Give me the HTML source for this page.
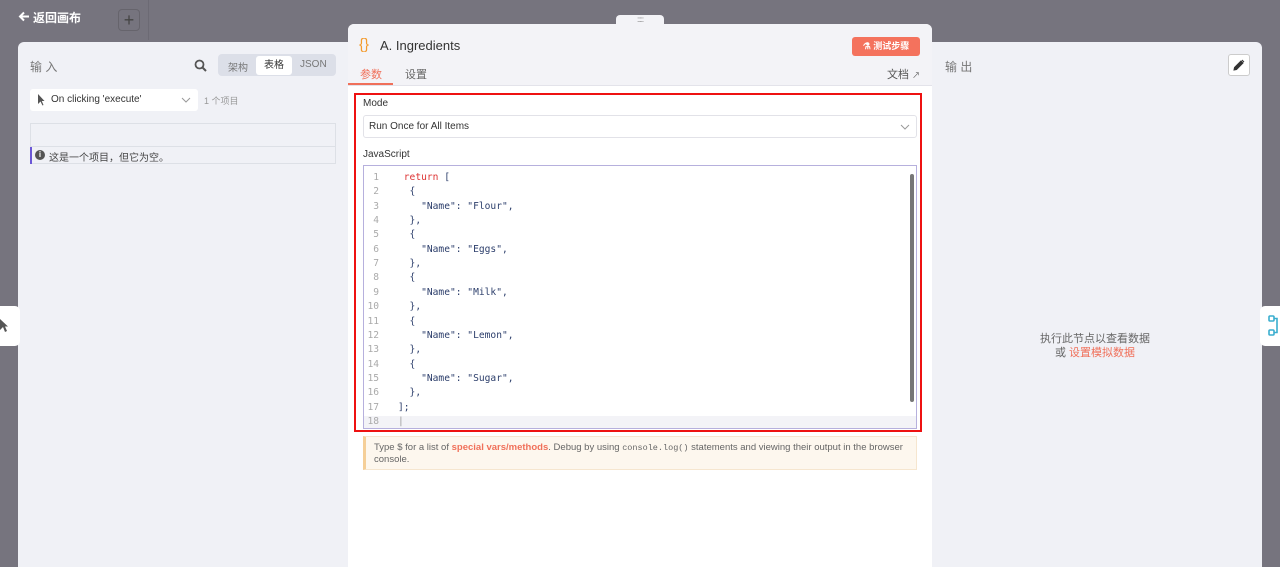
<!DOCTYPE html>
<html><head><meta charset="utf-8"><style>
*{box-sizing:border-box;margin:0;padding:0}
body{width:1280px;height:567px;overflow:hidden;background:#76747e;font-family:"Liberation Sans","Noto Sans CJK SC",sans-serif;position:relative;font-size:12px;color:#555}
.abs{position:absolute}
.code{font-family:"DejaVu Sans Mono","Liberation Mono",monospace;font-size:9.6px}
.ln{position:absolute;left:0;width:22px;text-align:right;color:#aaa}
.cl{position:absolute;left:41px;color:#2c3e6b;white-space:pre}
</style></head><body>
<div class="abs" style="left:148px;top:0;width:1px;height:40px;background:#6c6a74"></div>
<svg class="abs" style="left:18px;top:11px" width="12" height="11" viewBox="0 0 12 11"><path d="M11 5.5H2M6 1.5L2 5.5L6 9.5" fill="none" stroke="#fff" stroke-width="2"/></svg>
<div class="abs" style="left:33px;top:9px;color:#fff;font-size:12px;font-weight:bold">返回画布</div>
<div class="abs" style="left:118px;top:9px;width:22px;height:22px;border:1px solid #66646c;border-radius:4px;color:#444;text-align:center;font-size:18px;line-height:20px">+</div>

<div class="abs" style="left:18px;top:42px;width:340px;height:525px;background:#f0f1f6;border-radius:6px 0 0 0"></div>
<div class="abs" style="left:30px;top:58px;font-size:12px;color:#777">输 入</div>
<svg class="abs" style="left:194px;top:59px" width="13" height="13" viewBox="0 0 13 13"><circle cx="5.5" cy="5.5" r="4" fill="none" stroke="#555" stroke-width="1.8"/><path d="M8.5 8.5L12 12" stroke="#555" stroke-width="2"/></svg>
<div class="abs" style="left:218px;top:54px;width:118px;height:22px;background:#dcdfe8;border-radius:4px"></div>
<div class="abs" style="left:228px;top:59px;font-size:10px;color:#777">架构</div>
<div class="abs" style="left:256px;top:56px;width:36px;height:19px;background:#fff;border-radius:3px;font-size:10px;color:#333;text-align:center;line-height:19px">表格</div>
<div class="abs" style="left:300px;top:59px;font-size:10px;color:#777">JSON</div>
<div class="abs" style="left:30px;top:89px;width:168px;height:22px;background:#fff;border-radius:3px"></div>
<svg class="abs" style="left:37px;top:94px" width="8" height="12" viewBox="0 0 8 12"><path d="M1 0V10L3.5 7.5L5.5 11.5L6.5 11L4.8 7H7.5Z" fill="#555"/></svg>
<div class="abs" style="left:51px;top:94px;font-size:10px;color:#333">On clicking 'execute'</div>
<svg class="abs" style="left:181px;top:97px" width="10" height="6" viewBox="0 0 10 6"><path d="M1 1L5 5L9 1" fill="none" stroke="#999"/></svg>
<div class="abs" style="left:204px;top:94px;font-size:9px;color:#999">1 个项目</div>
<div class="abs" style="left:30px;top:123px;width:306px;height:41px;border:1px solid #dde0e6"></div>
<div class="abs" style="left:30px;top:146px;width:306px;height:1px;background:#dde0e6"></div>
<div class="abs" style="left:30px;top:147px;width:2px;height:17px;background:#6b57d6"></div>
<div class="abs" style="left:35px;top:150px;width:10px;height:10px;border-radius:50%;background:#555;color:#fff;font-size:8px;text-align:center;line-height:10px;font-weight:bold">i</div>
<div class="abs" style="left:49px;top:149px;font-size:10px;color:#444">这是一个项目，但它为空。</div>

<div class="abs" style="left:922px;top:42px;width:340px;height:525px;background:#f0f1f6;border-radius:0 6px 0 0"></div>
<div class="abs" style="left:945px;top:58px;font-size:12px;color:#777">输 出</div>
<div class="abs" style="left:1228px;top:54px;width:22px;height:22px;background:#fff;border:1px solid #ccc;border-radius:3px"></div>
<svg class="abs" style="left:1233px;top:59px" width="12" height="12" viewBox="0 0 12 12"><path d="M1 11L1.5 8.5L8 2L10 4L3.5 10.5Z M9 1L11 3" fill="#333" stroke="#333" stroke-width="1"/></svg>
<div class="abs" style="left:1040px;top:332px;font-size:11px;color:#666;width:110px;text-align:center;line-height:14px">执行此节点以查看数据<br>或 <span style="color:#f0705a">设置模拟数据</span></div>
<div class="abs" style="left:1260px;top:306px;width:20px;height:40px;background:#fff;border-radius:5px 0 0 5px"></div>
<svg class="abs" style="left:1268px;top:315px" width="12" height="22" viewBox="0 0 12 22"><rect x="1" y="1" width="5" height="5" rx="1" fill="none" stroke="#3aaecf" stroke-width="1.6"/><rect x="1" y="15" width="5" height="5" rx="1" fill="none" stroke="#3aaecf" stroke-width="1.6"/><path d="M6 3.5H9V17.5H6" fill="none" stroke="#3aaecf" stroke-width="1.6"/></svg>
<div class="abs" style="left:0;top:306px;width:20px;height:40px;background:#fff;border-radius:0 5px 5px 0"></div>
<svg class="abs" style="left:0;top:319px" width="8" height="14" viewBox="0 0 8 14"><path d="M0 0V11L3 8L5 13L7 12L5 7.5H8Z" fill="#555"/></svg>

<div class="abs" style="left:616px;top:15px;width:48px;height:14px;background:#f3f3f7;border-radius:4px 4px 0 0;font-size:8px;color:#888;text-align:center;letter-spacing:-1px">:::::</div>
<div class="abs" style="left:348px;top:24px;width:584px;height:543px;background:#fff;border-radius:6px 6px 0 0;overflow:hidden">
 <div style="height:62px;background:#f3f3f7;border-bottom:1px solid #e3e3ea"></div>
</div>
<div class="abs" style="left:359px;top:36px;font-size:15px;color:#f39a2c">{}</div>
<div class="abs" style="left:380px;top:38px;font-size:13px;color:#333">A. Ingredients</div>
<div class="abs" style="left:852px;top:37px;width:68px;height:19px;background:#f4725d;border-radius:3px;color:#fff;font-size:9px;text-align:center;line-height:19px;font-weight:bold">⚗ 测试步骤</div>
<div class="abs" style="left:360px;top:66px;font-size:11px;color:#f0705a">参数</div>
<div class="abs" style="left:348px;top:83px;width:45px;height:2px;background:#f0705a"></div>
<div class="abs" style="left:405px;top:66px;font-size:11px;color:#666">设置</div>
<div class="abs" style="left:887px;top:66px;font-size:11px;color:#555">文档 <span style="font-size:8px">↗</span></div>

<div class="abs" style="left:354px;top:93px;width:568px;height:339px;border:2px solid #ee1111"></div>
<div class="abs" style="left:363px;top:98px;font-size:10px;color:#333">Mode</div>
<div class="abs" style="left:363px;top:115px;width:554px;height:23px;border:1px solid #e2e2e8;border-radius:3px"></div>
<div class="abs" style="left:369px;top:121px;font-size:10px;color:#333">Run Once for All Items</div>
<svg class="abs" style="left:900px;top:124px" width="10" height="6" viewBox="0 0 10 6"><path d="M1 1L5 5L9 1" fill="none" stroke="#999"/></svg>
<div class="abs" style="left:363px;top:149px;font-size:10px;color:#333">JavaScript</div>
<div class="abs" style="left:363px;top:165px;width:554px;height:264px;border:1px solid #b6b0dd;background:#fff;overflow:hidden">
 <div class="abs" style="left:0;top:250px;width:552px;height:14px;background:#f3f3f7"></div>
 <div class="abs" style="left:546px;top:8px;width:4px;height:228px;background:#777;border-radius:2px"></div>
 <div class="abs code" style="left:-7px;top:6px;width:550px">
  <div class="ln" style="top:0">1</div><div class="cl" style="top:0;color:#d33"> return <span style="color:#2c3e6b">[</span></div>
  <div class="ln" style="top:14.35px">2</div><div class="cl" style="top:14.35px">  {</div>
  <div class="ln" style="top:28.7px">3</div><div class="cl" style="top:28.7px">    "Name": "Flour",</div>
  <div class="ln" style="top:43.05px">4</div><div class="cl" style="top:43.05px">  },</div>
  <div class="ln" style="top:57.4px">5</div><div class="cl" style="top:57.4px">  {</div>
  <div class="ln" style="top:71.75px">6</div><div class="cl" style="top:71.75px">    "Name": "Eggs",</div>
  <div class="ln" style="top:86.1px">7</div><div class="cl" style="top:86.1px">  },</div>
  <div class="ln" style="top:100.45px">8</div><div class="cl" style="top:100.45px">  {</div>
  <div class="ln" style="top:114.8px">9</div><div class="cl" style="top:114.8px">    "Name": "Milk",</div>
  <div class="ln" style="top:129.15px">10</div><div class="cl" style="top:129.15px">  },</div>
  <div class="ln" style="top:143.5px">11</div><div class="cl" style="top:143.5px">  {</div>
  <div class="ln" style="top:157.85px">12</div><div class="cl" style="top:157.85px">    "Name": "Lemon",</div>
  <div class="ln" style="top:172.2px">13</div><div class="cl" style="top:172.2px">  },</div>
  <div class="ln" style="top:186.55px">14</div><div class="cl" style="top:186.55px">  {</div>
  <div class="ln" style="top:200.9px">15</div><div class="cl" style="top:200.9px">    "Name": "Sugar",</div>
  <div class="ln" style="top:215.25px">16</div><div class="cl" style="top:215.25px">  },</div>
  <div class="ln" style="top:229.6px">17</div><div class="cl" style="top:229.6px">];</div>
  <div class="ln" style="top:244px">18</div><div class="cl" style="top:244px;color:#999">|</div>
 </div>
</div>
<div class="abs" style="left:363px;top:436px;width:554px;height:34px;background:#fdf7ee;border:1px solid #f6e6cf;border-left:3px solid #f5cf98"></div>
<div class="abs" style="left:374px;top:442px;width:535px;font-size:9.5px;color:#666;line-height:12px">Type $ for a list of <span style="color:#f0705a;font-weight:bold">special vars/methods</span>. Debug by using <span style="font-family:'Liberation Mono',monospace;font-size:8.5px">console.log()</span> statements and viewing their output in the browser console.</div>
</body></html>
